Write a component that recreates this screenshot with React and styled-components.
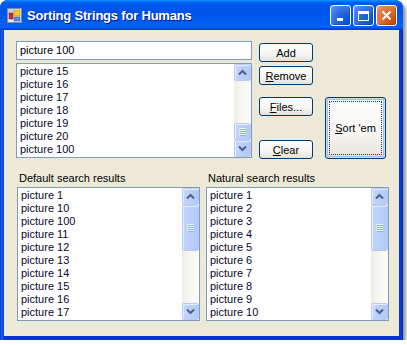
import React from "react";
import styled, { createGlobalStyle } from "styled-components";

const GlobalStyle = createGlobalStyle`
  html, body {
    margin: 0;
    padding: 0;
    background: #fff;
  }
  body {
    font-family: "Liberation Sans", Arial, sans-serif;
    font-size: 11px;
  }
`;

const source = ["picture 15", "picture 16", "picture 17", "picture 18", "picture 19", "picture 20", "picture 100"];
const defaultResults = ["1", "10", "100", "11", "12", "13", "14", "15", "16", "17"].map((n) => `picture ${n}`);
const naturalResults = ["1", "2", "3", "4", "5", "6", "7", "8", "9", "10"].map((n) => `picture ${n}`);

const Window = styled.div`
  width: 403px;
  height: 340px;
  display: flex;
  flex-direction: column;
  border-radius: 8px 8px 0 0;
  background: linear-gradient(90deg, #0831d9 0, #166aee 2px, #0831d9 4px, #0831d9 399px, #0a3ee0 401px, #001ea0 403px);
  box-shadow: 3px 3px 3px rgba(0, 0, 0, 0.4);
  overflow: hidden;
`;

const TitleBar = styled.div`
  height: 30px;
  flex-shrink: 0;
  display: flex;
  align-items: center;
  padding: 0 6px 0 7px;
  background: linear-gradient(
    180deg,
    #0997ff 0,
    #0058ee 10%,
    #0054e8 40%,
    #0060f5 85%,
    #005cf0 93%,
    #003dd7 97%,
    #003dd7 100%
  );
`;

const Title = styled.span`
  flex: 1;
  margin-left: 5px;
  color: #fff;
  font-family: "Liberation Sans", Arial, sans-serif;
  font-weight: bold;
  font-size: 13px;
  letter-spacing: -0.2px;
  text-shadow: 1px 1px 0 #0a1883;
`;

const CaptionButton = styled.div`
  width: 21px;
  height: 21px;
  box-sizing: border-box;
  border: 1px solid #fff;
  border-radius: 3px;
  margin-left: 2px;
  display: flex;
  align-items: center;
  justify-content: center;
  background: ${(p) =>
    p.$close
      ? "radial-gradient(circle at 85% 85%, #cc4600 0, #dc6527 40%, #e5845a 80%, #f0a08a 100%)"
      : "radial-gradient(circle at 85% 85%, #0054e9 0, #2263d5 40%, #4683f5 80%, #6a9cf8 100%)"};
  box-shadow: inset -1px -1px 1px rgba(0, 0, 0, 0.2);
`;

const Client = styled.div`
  flex: 1;
  margin: 0 4px 4px 4px;
  background: #ece9d8;
  display: flex;
  flex-direction: column;
  padding: 11px 0 0 12px;
  box-sizing: border-box;
`;

const TopRow = styled.div`
  display: flex;
  align-items: flex-start;
`;

const InputColumn = styled.div`
  width: 236px;
  display: flex;
  flex-direction: column;
  gap: 3px;
`;

const TextBox = styled.div`
  height: 19px;
  box-sizing: border-box;
  border: 1px solid #7f9db9;
  background: #fff;
  padding: 2px 3px;
  line-height: 13px;
  color: #000;
`;

const ListBox = styled.div`
  height: ${(p) => p.$height}px;
  width: ${(p) => (p.$width ? `${p.$width}px` : "auto")};
  box-sizing: border-box;
  border: 1px solid #7f9db9;
  background: #fff;
  display: flex;
  overflow: hidden;
`;

const Items = styled.div`
  flex: 1;
  padding: 1px 3px;
  overflow: hidden;
`;

const Item = styled.div`
  height: 13px;
  line-height: 13px;
  color: #08082a;
  white-space: nowrap;
`;

const ScrollBar = styled.div`
  width: 17px;
  display: flex;
  flex-direction: column;
  background: linear-gradient(90deg, #eeede5 0, #f7f6f1 40%, #fdfdfa 100%);
`;

const Track = styled.div`
  flex: 1;
  display: flex;
  flex-direction: column;
  justify-content: ${(p) => (p.$end ? "flex-end" : "flex-start")};
`;

const ScrollPart = styled.div`
  width: 17px;
  height: ${(p) => p.$h || 17}px;
  box-sizing: border-box;
  border: 1px solid #b7cbf5;
  border-radius: 2px;
  background: linear-gradient(90deg, #c5d5fc 0, #bccffa 50%, #b4c8f6 100%);
  box-shadow: inset 1px 1px 0 #e6eefc;
  display: flex;
  align-items: center;
  justify-content: center;
`;

const ButtonColumn = styled.div`
  display: flex;
  flex-direction: column;
  margin-left: 7px;
  padding-top: 2px;
`;

const Button = styled.div`
  width: ${(p) => p.$w || 54}px;
  height: ${(p) => p.$h || 19}px;
  margin-top: ${(p) => p.$mt || 0}px;
  box-sizing: border-box;
  border: 1px solid #003c74;
  border-radius: 3px;
  background: linear-gradient(180deg, #ffffff 0, #f6f5f1 60%, #e3e2da 100%);
  display: flex;
  align-items: center;
  justify-content: center;
  color: #000;
  position: relative;
  u {
    text-decoration: underline;
  }
`;

const DefaultButton = styled(Button)`
  margin-left: 12px;
  margin-top: 56px;
  box-shadow: inset 0 0 0 1px #cddcf4, inset 0 0 0 2px #a4bfe8;
  &::after {
    content: "";
    position: absolute;
    inset: 3px;
    border: 1px dotted #333;
  }
`;

const BottomRow = styled.div`
  display: flex;
  gap: 6px;
  margin-top: 13px;
  padding-left: 1px;
`;

const ResultColumn = styled.div`
  display: flex;
  flex-direction: column;
`;

const Label = styled.div`
  height: 15px;
  line-height: 13px;
  padding-left: 2px;
  color: #000;
`;

const Arrow = ({ up }) => (
  <svg width="9" height="7" viewBox="0 0 9 7">
    <path
      d={up ? "M1 5.5 L4.5 2 L8 5.5" : "M1 1.5 L4.5 5 L8 1.5"}
      fill="none"
      stroke="#4d6185"
      strokeWidth="2"
    />
  </svg>
);

const Grip = () => (
  <svg width="7" height="8" viewBox="0 0 7 8">
    {[0, 2, 4, 6].map((y) => (
      <rect key={y} x="0" y={y} width="7" height="1" fill="#eef4fe" />
    ))}
    {[1, 3, 5, 7].map((y) => (
      <rect key={y} x="1" y={y} width="6" height="1" fill="#8cb0f8" />
    ))}
  </svg>
);

const Scroller = ({ thumbEnd, thumbH }) => (
  <ScrollBar>
    <ScrollPart>
      <Arrow up />
    </ScrollPart>
    <Track $end={thumbEnd}>
      <ScrollPart $h={thumbH}>
        <Grip />
      </ScrollPart>
    </Track>
    <ScrollPart>
      <Arrow />
    </ScrollPart>
  </ScrollBar>
);

const AppIcon = () => (
  <svg width="15" height="15" viewBox="0 0 15 15">
    <rect x="0.5" y="0.5" width="14" height="14" fill="#e8ecf4" stroke="#7b8fb0" />
    <rect x="1" y="1" width="6" height="6" fill="#c8d0de" />
    <rect x="2" y="5" width="4" height="6" fill="#d8262b" stroke="#8a1010" strokeWidth="0.5" />
    <rect x="7" y="2" width="6" height="6" fill="#f6c830" stroke="#b08010" strokeWidth="0.5" />
    <rect x="7" y="9" width="6" height="4" fill="#5a8fd8" stroke="#2a5aa0" strokeWidth="0.5" />
  </svg>
);

export default function App() {
  return (
    <>
      <GlobalStyle />
      <Window>
        <TitleBar>
          <AppIcon />
          <Title>Sorting Strings for Humans</Title>
          <CaptionButton>
            <svg width="13" height="13" viewBox="0 0 13 13">
              <rect x="3" y="9" width="6" height="3" fill="#fff" />
            </svg>
          </CaptionButton>
          <CaptionButton>
            <svg width="13" height="13" viewBox="0 0 13 13">
              <rect x="1.5" y="2.5" width="10" height="9" fill="none" stroke="#fff" />
              <rect x="1" y="2" width="11" height="3" fill="#fff" />
            </svg>
          </CaptionButton>
          <CaptionButton $close>
            <svg width="13" height="13" viewBox="0 0 13 13">
              <path d="M2.5 2.5 L10.5 10.5 M10.5 2.5 L2.5 10.5" stroke="#fff" strokeWidth="2" />
            </svg>
          </CaptionButton>
        </TitleBar>
        <Client>
          <TopRow>
            <InputColumn>
              <TextBox>picture 100</TextBox>
              <ListBox $height={95}>
                <Items>
                  {source.map((s) => (
                    <Item key={s}>{s}</Item>
                  ))}
                </Items>
                <Scroller thumbEnd thumbH={17} />
              </ListBox>
            </InputColumn>
            <ButtonColumn>
              <Button>Add</Button>
              <Button $mt={4}>
                <span>
                  <u>R</u>emove
                </span>
              </Button>
              <Button $mt={12}>
                <span>
                  <u>F</u>iles...
                </span>
              </Button>
              <Button $mt={24}>
                <span>
                  <u>C</u>lear
                </span>
              </Button>
            </ButtonColumn>
            <DefaultButton $w={61} $h={62}>
              <span>
                <u>S</u>ort 'em
              </span>
            </DefaultButton>
          </TopRow>
          <BottomRow>
            <ResultColumn>
              <Label>Default search results</Label>
              <ListBox $height={134} $width={183}>
                <Items>
                  {defaultResults.map((s) => (
                    <Item key={s}>{s}</Item>
                  ))}
                </Items>
                <Scroller thumbH={46} />
              </ListBox>
            </ResultColumn>
            <ResultColumn>
              <Label>Natural search results</Label>
              <ListBox $height={134} $width={183}>
                <Items>
                  {naturalResults.map((s) => (
                    <Item key={s}>{s}</Item>
                  ))}
                </Items>
                <Scroller thumbH={46} />
              </ListBox>
            </ResultColumn>
          </BottomRow>
        </Client>
      </Window>
    </>
  );
}
